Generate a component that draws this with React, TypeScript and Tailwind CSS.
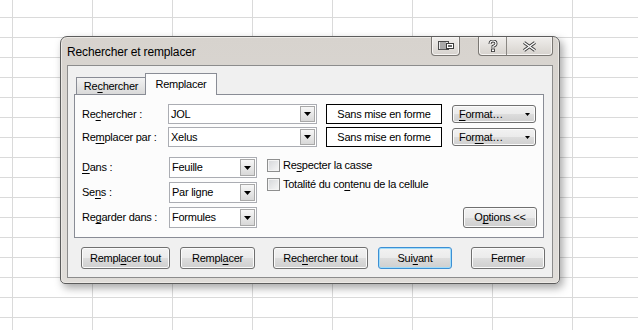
import React from "react";

function A({ t, i }: { t: string; i?: number }) {
  if (i === undefined) return <>{t}</>;
  return (
    <>
      {t.slice(0, i)}
      <span className="underline decoration-1 underline-offset-[2px]">{t[i]}</span>
      {t.slice(i + 1)}
    </>
  );
}

function Tri() {
  return (
    <svg width="7" height="4" viewBox="0 0 7 4">
      <path d="M0 0H7L3.5 4Z" fill="#000" />
    </svg>
  );
}

function DropBtn() {
  return (
    <div className="flex w-[15px] items-center justify-center border border-[#a8a8a8] bg-[linear-gradient(to_bottom,#f7f7f7,#d8d8d8)]">
      <Tri />
    </div>
  );
}

function Combo({ value, cls }: { value: string; cls: string }) {
  return (
    <div className={`flex border border-[#abadb3] bg-white p-[1px] ${cls}`}>
      <div className="flex flex-1 items-center pl-[1px]">{value}</div>
      <DropBtn />
    </div>
  );
}

function Btn({ children, cls, focus }: { children: React.ReactNode; cls: string; focus?: boolean }) {
  return (
    <div
      className={`flex items-center justify-center rounded-[3px] border bg-[linear-gradient(to_bottom,#f2f2f2_0%,#ebebeb_50%,#dddddd_50%,#cfcfcf_100%)] ${
        focus
          ? "border-[#3c8fd4] shadow-[inset_0_0_0_1px_#9fdcfa]"
          : "border-[#707070] shadow-[inset_0_0_0_1px_#fbfbfb]"
      } ${cls}`}
    >
      {children}
    </div>
  );
}

function Check({ children }: { children: React.ReactNode }) {
  return (
    <div className="flex h-[13px] items-center">
      <div className="h-[13px] w-[13px] border border-[#8e8f8f] bg-[linear-gradient(135deg,#d4d6d9,#f7f7f7)] shadow-[inset_0_0_0_1px_#f4f4f4]" />
      <div className="ml-[3px]">{children}</div>
    </div>
  );
}

function CapIcon1() {
  return (
    <svg width="16" height="10" viewBox="0 0 16 10">
      <rect x="0.5" y="0.5" width="10" height="8" fill="#e8e8e8" stroke="#4a4a4a" />
      <path d="M3 1V9M5 1V9M7 1V9" stroke="#6a6a6a" />
      <rect x="8.5" y="2.5" width="7" height="5" fill="#fff" stroke="#3a3a3a" />
      <rect x="10" y="4" width="4" height="2" fill="#6a6a6a" />
    </svg>
  );
}

function CapHelp() {
  return (
    <svg width="10" height="12" viewBox="0 0 10 12">
      <path d="M2 4Q2 1 5 1Q8 1 8 3.6Q8 5.6 5 6.5V8" fill="none" stroke="#3c3c3c" strokeWidth="3" />
      <path d="M2 4Q2 1 5 1Q8 1 8 3.6Q8 5.6 5 6.5V8" fill="none" stroke="#fff" strokeWidth="1.2" />
      <rect x="3.5" y="9" width="3" height="2.6" fill="#fff" stroke="#3c3c3c" strokeWidth="0.9" />
    </svg>
  );
}

function CapClose() {
  return (
    <svg width="15" height="11" viewBox="0 0 15 11">
      <path d="M2 1.5L13 9.5M13 1.5L2 9.5" stroke="#3c3c3c" strokeWidth="3.4" />
      <path d="M2 1.5L13 9.5M13 1.5L2 9.5" stroke="#fff" strokeWidth="1.4" />
    </svg>
  );
}

export default function App() {
  return (
    <div className="h-[330px] w-[638px] overflow-hidden bg-white bg-[linear-gradient(to_right,#dadada_1px,transparent_1px),linear-gradient(to_bottom,#dadada_1px,transparent_1px)] bg-[size:80px_20px] bg-[position:12px_17px] pl-[60px] pt-[36px] font-['Liberation_Sans',Arial,sans-serif] text-[11px] leading-none tracking-[-0.25px] text-black">
      <div className="flex h-[248px] w-[500px] flex-col rounded-t-[7px] rounded-b-[5px] border border-[#5c5c5c] bg-[linear-gradient(to_bottom,#d7d3ce,#e0ddd9)] px-[6px] pb-[5px] shadow-[3px_4px_8px_rgba(0,0,0,0.35),inset_0_0_0_1px_#ece9e5]">
        {/* title bar */}
        <div className="flex h-[28px] items-start">
          <div className="flex h-full flex-1 items-center pt-[1px] text-[12px] tracking-[-0.15px]">
            Rechercher et remplacer
          </div>
          <div className="flex h-[19px] w-[29px] items-center justify-center rounded-b-[4px] border border-t-0 border-[#7a7773] bg-[linear-gradient(to_bottom,#f0eeec,#d6d2cd)] shadow-[inset_0_0_0_1px_#f6f4f2]">
            <CapIcon1 />
          </div>
          <div className="ml-[18px] flex h-[19px] rounded-b-[4px] border border-t-0 border-[#7a7773] bg-[linear-gradient(to_bottom,#f0eeec,#d6d2cd)] shadow-[inset_0_0_0_1px_#f6f4f2]">
            <div className="flex w-[28px] items-center justify-center border-r border-[#8a8783]">
              <CapHelp />
            </div>
            <div className="flex w-[45px] items-center justify-center">
              <CapClose />
            </div>
          </div>
        </div>

        {/* client area */}
        <div className="flex h-[213px] flex-col border border-[#8c8c8c] bg-[#f0f0f0]">
          <div className="ml-[6px] mt-[7px] w-[470px]">
            {/* tabs */}
            <div className="flex h-[21px] items-end pl-[2px]">
              <div className="flex h-[17px] w-[70px] items-center justify-center border border-b-0 border-[#898c95] bg-[linear-gradient(to_bottom,#f3f3f3,#d9d9d9)] pt-[1px]">
                <A t="Rechercher" i={2} />
              </div>
              <div className="relative z-10 -mb-[1px] -ml-[1px] flex h-[22px] w-[72px] items-center justify-center border border-b-0 border-[#898c95] bg-[#fcfcfc] pb-[1px]">
                Remplacer
              </div>
            </div>
            {/* panel */}
            <div className="h-[144px] border border-[#898c95] bg-[#fcfcfc] pl-[7px]">
              <div className="mt-[9px] flex h-[20px] items-center">
                <div className="w-[86px]">
                  <A t="Rechercher :" i={2} />
                </div>
                <Combo value="JOL" cls="h-[20px] w-[149px]" />
                <div className="ml-[9px] flex h-[20px] w-[116px] items-center justify-center border border-black bg-white">
                  Sans mise en forme
                </div>
                <Btn cls="ml-[10px] h-[18px] w-[84px] pl-[6px] pr-[5px] !justify-between">
                  <span>
                    <A t="Format…" i={0} />
                  </span>
                  <svg width="5" height="3" viewBox="0 0 5 3">
                    <path d="M0 0H5L2.5 3Z" fill="#000" />
                  </svg>
                </Btn>
              </div>
              <div className="mt-[3px] flex h-[20px] items-center">
                <div className="w-[86px]">
                  <A t="Remplacer par :" i={2} />
                </div>
                <Combo value="Xelus" cls="h-[20px] w-[149px]" />
                <div className="ml-[9px] flex h-[20px] w-[116px] items-center justify-center border border-black bg-white">
                  Sans mise en forme
                </div>
                <Btn cls="ml-[10px] h-[18px] w-[84px] pl-[6px] pr-[5px] !justify-between">
                  <span>
                    <A t="Format…" i={3} />
                  </span>
                  <svg width="5" height="3" viewBox="0 0 5 3">
                    <path d="M0 0H5L2.5 3Z" fill="#000" />
                  </svg>
                </Btn>
              </div>

              <div className="mt-[10px] flex">
                <div className="flex flex-col gap-[4px]">
                  <div className="flex h-[21px] items-center">
                    <div className="w-[87px]">
                      <A t="Dans :" i={0} />
                    </div>
                    <Combo value="Feuille" cls="h-[21px] w-[88px]" />
                  </div>
                  <div className="flex h-[21px] items-center">
                    <div className="w-[87px]">
                      <A t="Sens :" i={2} />
                    </div>
                    <Combo value="Par ligne" cls="h-[21px] w-[88px]" />
                  </div>
                  <div className="flex h-[21px] items-center">
                    <div className="w-[87px]">
                      <A t="Regarder dans :" i={2} />
                    </div>
                    <Combo value="Formules" cls="h-[21px] w-[88px]" />
                  </div>
                </div>
                <div className="ml-[10px] flex flex-1 flex-col pr-[6px]">
                  <div className="mt-[2px] flex flex-col gap-[6px]">
                    <Check>
                      <A t="Respecter la casse" i={2} />
                    </Check>
                    <Check>
                      <A t="Totalité du contenu de la cellule" i={14} />
                    </Check>
                  </div>
                  <Btn cls="mt-auto h-[21px] w-[74px] self-end">
                    <A t="Options <<" i={1} />
                  </Btn>
                </div>
              </div>
            </div>
          </div>

          {/* bottom buttons */}
          <div className="mt-[9px] flex">
            <Btn cls="ml-[13px] h-[22px] w-[89px]">
              <A t="Remplacer tout" i={5} />
            </Btn>
            <Btn cls="ml-[10px] h-[22px] w-[75px]">
              <A t="Remplacer" i={5} />
            </Btn>
            <Btn cls="ml-[18px] h-[22px] w-[95px]">
              <A t="Rechercher tout" i={3} />
            </Btn>
            <Btn focus cls="ml-[10px] h-[22px] w-[74px]">
              <A t="Suivant" i={3} />
            </Btn>
            <Btn cls="ml-[19px] h-[22px] w-[74px]">
              Fermer
            </Btn>
          </div>
        </div>
      </div>
    </div>
  );
}
